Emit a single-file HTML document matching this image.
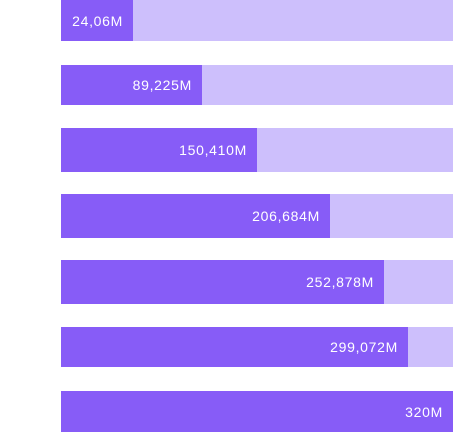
<!DOCTYPE html>
<html><head><style>
body{margin:0;width:453px;height:432px;background:#fff;position:relative;overflow:hidden;font-family:"Liberation Sans",sans-serif}
.b{position:absolute;left:61px;right:0;background:#cdbffc}
.f{position:absolute;left:0;top:0;bottom:0;background:#875cf7;color:#fff;font-size:14px;letter-spacing:0.7px;display:flex;align-items:center;justify-content:flex-end;padding-right:10px;box-sizing:border-box}
</style></head><body>
<div class="b" style="top:0;height:41px"><div class="f" style="width:72px">24,06M</div></div>
<div class="b" style="top:65px;height:40px"><div class="f" style="width:141px">89,225M</div></div>
<div class="b" style="top:128px;height:44px"><div class="f" style="width:196px">150,410M</div></div>
<div class="b" style="top:194px;height:44px"><div class="f" style="width:269px">206,684M</div></div>
<div class="b" style="top:260px;height:44px"><div class="f" style="width:323px">252,878M</div></div>
<div class="b" style="top:327px;height:40px"><div class="f" style="width:347px">299,072M</div></div>
<div class="b" style="top:391px;height:41px"><div class="f" style="width:392px">320M</div></div>
</body></html>
